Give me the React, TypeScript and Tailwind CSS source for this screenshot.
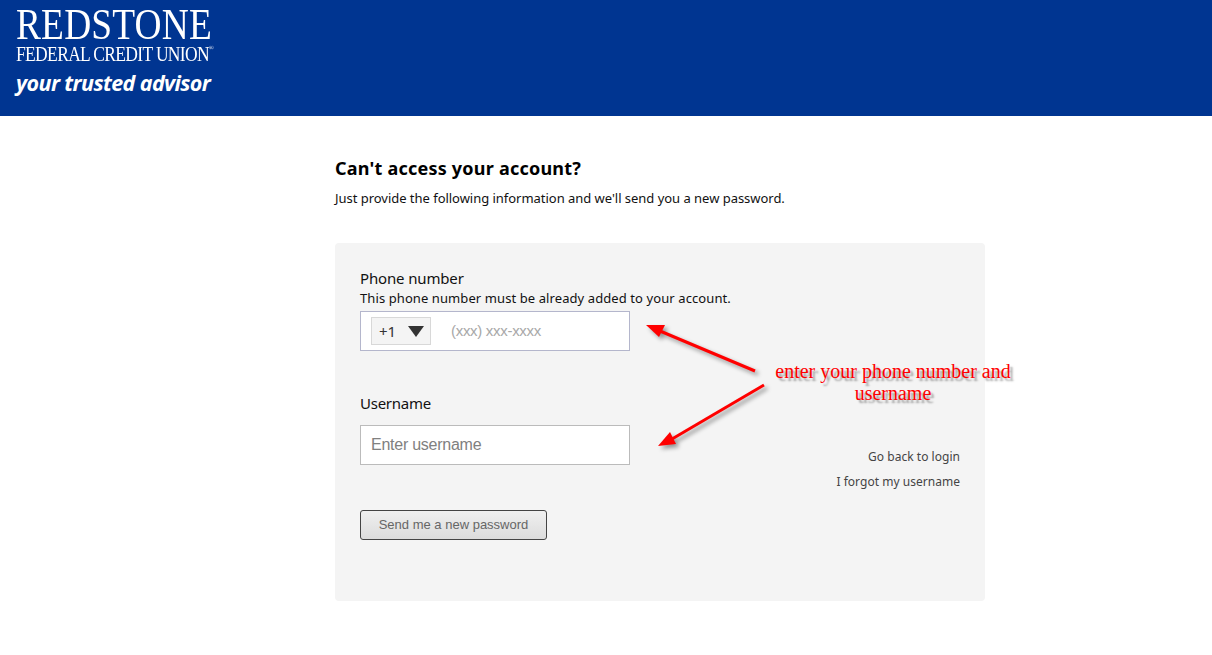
const sans = "font-['Noto_Sans','Open_Sans',sans-serif]";

function Arrows() {
  return (
    <svg className="absolute left-[630px] top-[310px] overflow-visible [filter:drop-shadow(3px_3px_2px_rgba(0,0,0,0.4))]" width="150" height="150" viewBox="0 0 150 150" fill="none">
      <path d="M125 61 L30 21" stroke="#ff0000" strokeWidth="3" />
      <path d="M16 15 L35 15 L29 27 Z" fill="#ff0000" />
      <path d="M134 75 L42 129" stroke="#ff0000" strokeWidth="3" />
      <path d="M28 136 L40 122 L46 134 Z" fill="#ff0000" />
    </svg>
  );
}

export default function App() {
  return (
    <div className={`relative min-h-[655px] bg-white overflow-hidden ${sans}`}>
      {/* Header */}
      <header className="h-[116px] bg-[#003591] pl-4 text-white">
        <div className="h-[43px] w-fit origin-left scale-x-[0.85] font-['Liberation_Serif',serif] text-[44px] leading-[50px] tracking-[0.2px] whitespace-nowrap">REDSTONE</div>
        <div className="w-fit origin-left scale-x-[0.875] font-['Liberation_Serif',serif] text-[20px] leading-[22px] tracking-[-0.75px] whitespace-nowrap">
          FEDERAL CREDIT UNION<sup className="text-[7px] align-super">®</sup>
        </div>
        <div className="mt-[3px] font-['Open_Sans',sans-serif] text-[21.5px] leading-[30px] font-bold tracking-[-0.6px] whitespace-nowrap italic">your trusted advisor</div>
      </header>

      {/* Content */}
      <main className="ml-[335px] w-[650px] pt-[40px]">
        <h1 className="text-[18px] leading-[24px] font-bold tracking-[0.22px] text-black">Can't access your account?</h1>
        <p className="mt-[8px] text-[13px] leading-[20px] tracking-[-0.03px] text-[#111]">
          Just provide the following information and we'll send you a new password.
        </p>

        <section className="relative mt-[35px] h-[358px] rounded-[4px] bg-[#f4f4f4] pl-[25px] pt-[25px]">
          <label className="block text-[15px] leading-[20px] tracking-[-0.15px] text-[#111]">Phone number</label>
          <p className="mt-[1px] text-[13px] leading-[18px] tracking-[0.09px] text-[#111]">This phone number must be already added to your account.</p>
          <div className="mt-[4px] flex h-[40px] w-[270px] items-center border border-[#b4b6cc] bg-white pl-[10px]">
            <div className="flex h-[28px] w-[60px] items-center border border-[#d8d8d8] bg-[#f4f4f4] pl-[7px]">
              <span className="text-[15px] leading-[20px] text-[#333]">+1</span>
              <span className="ml-[12px] h-0 w-0 border-x-[8px] border-t-[11px] border-x-transparent border-t-[#333]"></span>
            </div>
            <span className="ml-[20px] font-['Liberation_Sans',sans-serif] text-[15px] tracking-[-0.3px] text-[#a8a8a8]">(xxx) xxx-xxxx</span>
          </div>

          <label className="mt-[42px] block text-[15px] leading-[20px] tracking-[-0.25px] text-[#111]">Username</label>
          <div className="mt-[12px] flex h-[40px] w-[270px] items-center border border-[#bbb] bg-white pl-[10px]">
            <span className="font-['Liberation_Sans',sans-serif] text-[16px] tracking-[-0.25px] text-[#808080]">Enter username</span>
          </div>

          <button className="mt-[45px] flex h-[30px] w-[187px] items-center justify-center rounded-[3px] border border-[#444] bg-gradient-to-b from-[#f0f0f0] to-[#dcdcdc] font-['Liberation_Sans',sans-serif] text-[13px] tracking-[0px] text-[#666]">
            Send me a new password
          </button>

          <div className="absolute right-[25px] top-[201px] text-right text-[12px] leading-[25px] tracking-[0.03px] text-[#444]">
            <div>Go back to login</div>
            <div>I forgot my username</div>
          </div>
        </section>
      </main>

      {/* Annotation */}
      <Arrows />
      <div className="absolute left-[750px] top-[360px] w-[286px] text-center font-['Liberation_Serif',serif] text-[20px] leading-[22px] text-[#ff0000] [text-shadow:3px_3px_2px_rgba(0,0,0,0.35)]">
        enter your phone number and username
      </div>
    </div>
  );
}
